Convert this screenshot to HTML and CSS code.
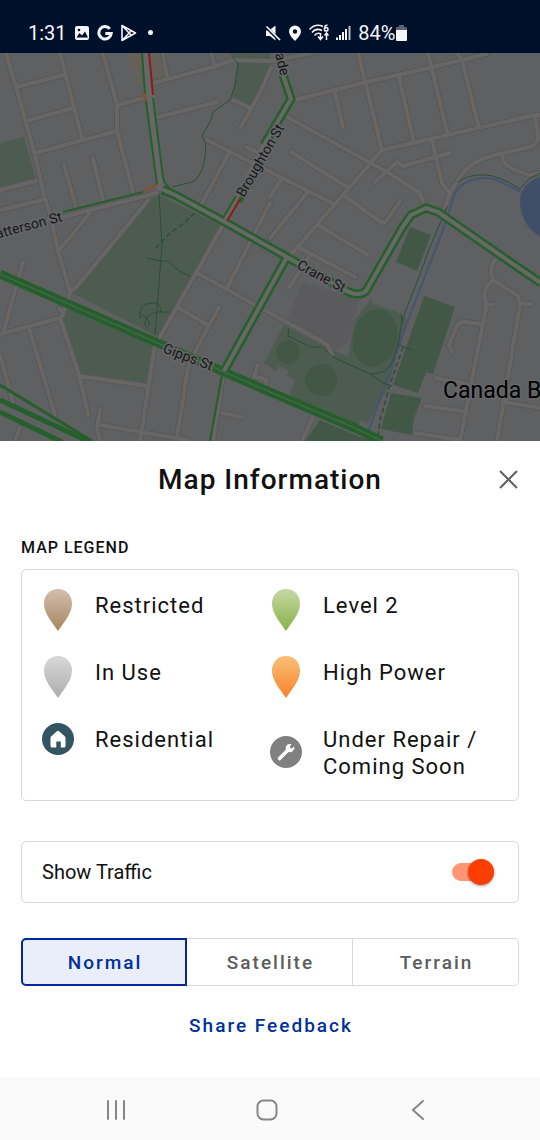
FILE: index.html
```
<!DOCTYPE html>
<html lang="en">
<head>
  <meta charset="UTF-8" />
  <meta name="viewport" content="width=device-width, initial-scale=1" />
  <title>Map Information</title>
  <link rel="stylesheet" href="styles.css">
</head>

<body>
  <header class="status-bar">
    <div class="status-group">
      <span class="time">1:31</span>
      <svg width="16" height="16" viewBox="0 0 16 16">
        <rect x="1" y="1" width="14" height="14" rx="2" fill="#f4f6fa"/>
        <path d="M2.500 12.500l3-4.500 2.500 2.500 3-4 3 6z" fill="#000f2a"/>
        <circle cx="5" cy="5" r="1.300" fill="#000f2a"/>
      </svg>
      <svg width="16" height="16" viewBox="0 0 16 16" fill="none" stroke="#f4f6fa" stroke-width="3">
        <path d="M12.800 3.800A6.200 6.200 0 1 0 14.200 8.600H8.300"/>
      </svg>
      <svg width="17" height="18" viewBox="0 0 17 18" fill="none" stroke="#f4f6fa" stroke-width="1.600" stroke-linejoin="round">
        <path d="M2 1.500v15L15.500 9zM2 1.500l9.500 10M2 16.500l9.500-10"/>
      </svg>
      <span class="dot"></span>
    </div>
    <div class="status-group">
      <svg width="16" height="16" viewBox="0 0 16 16" fill="#f4f6fa">
        <path d="M1 5.500h3L10.500 0.500v15L5 11H1z"/>
        <path d="M0.500 1.500l14 14" stroke="#000f2a" stroke-width="3"/>
        <path d="M1.500 1.500l13.500 13.500" stroke="#f4f6fa" stroke-width="1.700"/>
      </svg>
      <svg width="14" height="16" viewBox="0 0 14 16">
        <path fill-rule="evenodd" fill="#f4f6fa" d="M7 0.500a6 6 0 0 0-6 6C1 10.500 7 16 7 16s6-5.500 6-9.500a6 6 0 0 0-6-6zM7 4.300a2.200 2.200 0 1 1 0 4.400 2.200 2.200 0 0 1 0-4.400z"/>
      </svg>
      <svg width="20" height="17" viewBox="0 0 20 17" fill="none" stroke="#f4f6fa" stroke-width="1.500">
        <path d="M0.500 5.500Q6.500-1 14 2.500M3 8.500Q7 3.500 13 6.500M5.500 11.500Q8 8 12 10M11.500 9v6.500M9 12.500l2.500 3 2.500-3M17.500 16V9.500M15.500 11.500l2-2.500 2 2.500"/>
        <path d="M18.500 1.300Q15.500 0.800 15.500 5"/>
        <circle cx="17.200" cy="5.200" r="1.800"/>
      </svg>
      <svg width="15" height="16" viewBox="0 0 15 16" stroke="#f4f6fa" stroke-width="2">
        <path d="M1 12.500V15M4 10v5M7 7v8M10 4v11"/>
        <path d="M13.500 1v14" stroke="#b9c0cc"/>
      </svg>
      <span class="battery">84%<svg width="11" height="16" viewBox="0 0 11 16">
        <path d="M3 0h5v2h2a1 1 0 0 1 1 1v3H0V3a1 1 0 0 1 1-1h2z" fill="#596377"/>
        <path d="M0 5h11v10a1 1 0 0 1-1 1H1a1 1 0 0 1-1-1z" fill="#f4f6fa"/>
      </svg></span>
    </div>
  </header>

  <main>
    <svg class="map" viewBox="0 53 540 388" preserveAspectRatio="xMidYMid slice" role="img" aria-label="Street map with traffic">
      <defs>
        <!-- minor streets, drawn twice: dark casing, then fill -->
        <g id="streets">
          <path d="M5 50L14 80 26 122 35 155 44 195 50 215 58 250 70 292 68 300 62 316M17 87L63 75M26 121L73 108M60 53L82 138M35 153L117 131M103 53L117 105V131L133 192M117 105L144 98M64 165L76 207M93 158L103 200M0 190L36 181M0 210L42 200M0 233L63 217 157 193M90 213L60 249M148 200L107 250 77 286 70 292"/>
          <path d="M153 83L213 67 233 60 270 61M158 117L217 102M163 53L167 78M211 53L215 66M271 68L260 93 240 128M233 100L250 108M207 140L332 203M229 153L202 203M246 147L268 157M222 227L160 337 155 345 140 441M270 203L227 288M197 273L328 345 332 355M177 307L208 325M219 307L195 352 188 368 177 437M100 425L187 440M100 410L97 428 100 441"/>
          <path d="M78 376L148 386M60 318L80 378 88 415M0 334L60 318M59 309L63 312M29 328L55 415M0 355L13 402M23 262L4 330M20 428L15 441M223 375L213 441M222 413L242 417"/>
          <path d="M270 61L313 53M358 53L382 150M295 100L367 82 433 67 487 54M335 92L343 127M399 77L414 143M428 53L448 136M457 53L462 60 479 128M287 117L387 172 420 193 423 202M382 150L535 115H541M382 150L295 250 289 256M535 115L538 137Q538 144 530 147L500 154Q470 160 460 177L450 193 445 207M502 155Q503 165 515 170L528 175 541 173M432 140L442 183 448 191M375 182L397 162 403 166 450 153M291 152L347 187M343 195L378 220Q384 225 388 219L400 201M318 225L368 255M282 178L270 197M307 193L270 238M298 247L355 277M310 255L289 288"/>
          <path d="M497 257Q488 268 493 280L518 296 520 305 497 441M493 280Q484 287 485 295L486 308 460 441M486 305L494 304M520 304L531 304M482 324L464 322Q458 322 456 328L449 345 452 352M436 378L473 385M503 402L541 408M425 406L462 411M415 433L460 440M313 417L302 441M258 365L254 377 266 379V384"/>
        </g>
      </defs>

      <rect y="53" width="540" height="388" fill="#5f6062"/>
      <path fill="#656157" d="M128 53H163V78L138 85 134 71 129 67z"/>
      <path fill="#5b5b5e" d="M302 282L359 300 349 342 335 350 286 323z"/>

      <!-- parks -->
      <g fill="#4d5c50">
        <path d="M0 143L24 137 36 180 0 188zM230 53H270V66L250 107 231 100 238 66z"/>
        <path d="M157 194L222 226 158 337 72 293 110 250zM66 304L154 345 147 384 80 375 62 320z"/>
        <path d="M284 325L328 348 348 356 355 320 371 299 373 304 397 312 407 318 388 388 368 423 361 420 358 428 289 396 295 381 287 376 288 370 278 366 276 371 264 363z"/>
      </g>
      <g fill="#435746">
        <ellipse cx="375" cy="338" rx="22" ry="29" transform="rotate(14 375 338)"/>
        <circle cx="288" cy="352" r="12"/>
        <circle cx="321" cy="380" r="16"/>
        <path d="M410 227L431 235 417 271 396 262zM424 296L455 307 433 374 426 372 418 393 393 385zM391 393L422 398 414 418 412 435 381 429zM320 420L360 437 385 441H305zM483 53H493L485 56z"/>
      </g>

      <!-- water -->
      <path fill="#3f4f68" d="M541 176Q520 184 520 202 521 226 541 237z"/>
      <path fill="none" stroke="#45546f" stroke-width="2" d="M521 192L497 180Q482 175 467 182 456 187 453 199L443 230 410 315 368 432"/>

      <use href="#streets" fill="none" stroke="#58585a" stroke-width="6" stroke-linecap="round" stroke-linejoin="round"/>
      <use href="#streets" fill="none" stroke="#676665" stroke-width="4" stroke-linecap="round" stroke-linejoin="round"/>

      <!-- walking paths -->
      <g fill="none" stroke="#2a5035" stroke-width="1">
        <path d="M232 57L238 63 235 85 230 100 213 112 210 122 202 136 205 142Q207 155 202 170 196 183 188 183L172 187M159 194L162 245 155 335M146 258L160 261 168 261 178 270 191 277M171 312H158Q146 314 145 323 145 330 150 324 144 310 140 318 138 304 151 303 161 302 161 312"/>
        <path d="M457 182Q470 174 485 175 498 175 520 189L530 178 541 173M447 207L430 247 419 277 402 320 398 345 392 362Q387 374 370 374L333 357 322 347 311 347 288 336 289 328M370 374L383 383 392 386M397 344L412 350M401 313L402 324"/>
        <path stroke-dasharray="5 3" stroke-width="1.500" d="M195 213L184 223 169 234 156 248M403 347L390 385 380 420 378 437"/>
      </g>

      <!-- traffic -->
      <g fill="none" stroke-linejoin="round">
        <path stroke="#676766" stroke-width="8" d="M146 53L160 188"/>
        <g stroke="#255f2b">
          <path stroke-width="9" d="M162 190L175 195 223 221 287 257 343 289Q358 298 366 291L402 228 411 215 426 208 438 212 500 255 541 283"/>
          <path stroke-width="9" d="M264 156L238 201M287 257L224 371M283 75L291 99 264 145"/>
          <path stroke-width="9" d="M0 274L160 344 270 392 355 428 382 441"/>
        </g>
        <path stroke="#686966" stroke-width="4" d="M157 187L175 195 223 221 287 257 343 289Q358 298 366 291L402 228 411 215 426 208 438 212 500 255 541 283M287 257L224 371M283 75L291 99 264 145 225 221"/>
        <path stroke="#5c665b" stroke-width="1" d="M0 274L160 344 270 392 355 428 382 441"/>
        <g stroke="#255f2b" stroke-width="2">
          <path d="M142 53L145 94M146 101L157 185M153 98L163 178Q165 186 174 191M222 376L210 441M223 218L236 196M63 212L143 192"/>
          <path stroke-width="3" d="M0 385L92 441"/>
          <path stroke-width="5" d="M0 400L92 443M0 412L62 442"/>
        </g>
        <path stroke="#8a1b1d" stroke-width="2" d="M149 53L153 95M227 221L240 199"/>
        <path stroke="#8b4f25" stroke-width="2" d="M145 93L144 97 146 101M143 191L157 185"/>
      </g>

      <!-- labels -->
      <g class="map-labels">
        <text transform="translate(63 221) rotate(-15)" text-anchor="end">atterson St</text>
        <text transform="translate(244 198) rotate(-60)">Broughton St</text>
        <text transform="translate(275 54) rotate(76)">ade</text>
        <text transform="translate(296 268) rotate(28)">Crane St</text>
        <text transform="translate(162 352) rotate(21)">Gipps St</text>
        <text class="suburb" x="443" y="398">Canada B</text>
      </g>
    </svg>

    <section class="sheet">
      <div class="sheet-header">
        <h1>Map Information</h1>
        <button class="close" type="button" aria-label="Close">
          <svg width="20" height="20" viewBox="0 0 20 20" fill="none" stroke="#616161" stroke-width="2">
            <path d="M1 1l17 17M18 1l-17 17"/>
          </svg>
        </button>
      </div>

      <h2>MAP LEGEND</h2>
      <svg class="defs" width="0" height="0" aria-hidden="true">
        <defs>
          <linearGradient id="brown" x2="0" y2="1"><stop stop-color="#d3beae"/><stop offset="1" stop-color="#a78561"/></linearGradient>
          <linearGradient id="green" x2="0" y2="1"><stop stop-color="#c5d9a4"/><stop offset="1" stop-color="#88b148"/></linearGradient>
          <linearGradient id="grey" x2="0" y2="1"><stop stop-color="#d8d8d8"/><stop offset="1" stop-color="#adadad"/></linearGradient>
          <linearGradient id="orange" x2="0" y2="1"><stop stop-color="#f9c077"/><stop offset="1" stop-color="#fa812b"/></linearGradient>
          <path id="pin" d="M16 0C8 0 2 6 2 14.500 2 24 9 32 16 42 23 32 30 24 30 14.500 30 6 24 0 16 0z"/>
        </defs>
      </svg>
      <ul class="legend card">
        <li><svg width="32" height="42"><use href="#pin" fill="url(#brown)"/></svg><span>Restricted</span></li>
        <li><svg width="32" height="42"><use href="#pin" fill="url(#green)"/></svg><span>Level 2</span></li>
        <li><svg width="32" height="42"><use href="#pin" fill="url(#grey)"/></svg><span>In Use</span></li>
        <li><svg width="32" height="42"><use href="#pin" fill="url(#orange)"/></svg><span>High Power</span></li>
        <li>
          <svg width="32" height="32" viewBox="0 0 32 32">
            <circle cx="16" cy="16" r="16" fill="#335561"/>
            <path d="M15 8.200q1-.8 2 0l5.700 5q.8.700.8 1.700V23q0 1.500-1.500 1.500h-3.200V18.500h-4.500v6H10q-1.500 0-1.500-1.500v-8.100q0-1 .8-1.700z" fill="#fff"/>
          </svg>
          <span>Residential</span>
        </li>
        <li class="two-line">
          <svg width="32" height="32" viewBox="0 0 32 32">
            <circle cx="16" cy="16" r="16" fill="#808080"/>
            <path d="M9.500 22.500L19 13" stroke="#fff" stroke-width="3.600" stroke-linecap="round"/>
            <path d="M21.500 8.300L19.700 10.800 20.500 12.200 22 12.500 24.200 10.200Q25 13 22.800 15 20.500 17 17.500 15.800L15.800 14Q14.800 11 17 9 19 7.300 21.500 8.300z" fill="#fff"/>
          </svg>
          <span>Under Repair / Coming Soon</span>
        </li>
      </ul>

      <div class="traffic card">
        <label for="traffic">Show Traffic</label>
        <input type="checkbox" id="traffic" class="switch" checked />
      </div>

      <div class="map-types">
        <button type="button" class="active">Normal</button>
        <button type="button">Satellite</button>
        <button type="button">Terrain</button>
      </div>

      <a class="feedback" href="#feedback">Share Feedback</a>
    </section>
  </main>

  <nav class="system-nav">
    <button type="button" aria-label="Recent apps">
      <svg width="24" height="24" viewBox="0 0 24 24" stroke="#868686" stroke-width="2" stroke-linecap="round"><path d="M4 3v18M12 3v18M20 3v18"/></svg>
    </button>
    <button type="button" aria-label="Home">
      <svg width="24" height="24" viewBox="0 0 24 24" fill="none" stroke="#868686" stroke-width="2"><rect x="2.500" y="2.500" width="19" height="19" rx="6"/></svg>
    </button>
    <button type="button" aria-label="Back">
      <svg width="24" height="24" viewBox="0 0 24 24" fill="none" stroke="#868686" stroke-width="2" stroke-linecap="round"><path d="M17 3L7 12l10 9"/></svg>
    </button>
  </nav>

  <script>
    const typeButtons = document.querySelectorAll(".map-types button");

    typeButtons.forEach(btn => {
      btn.addEventListener("click", () => {
        typeButtons.forEach(b => b.classList.remove("active"));
        btn.classList.add("active");
      });
    });
  </script>
</body>
</html>
```

FILE: styles.css
```
* { box-sizing: border-box; }

body {
  font-family: Roboto, sans-serif;
  margin: 0;
  min-height: 100vh;
  display: flex;
  flex-direction: column;
  background: #fff;
  color: #111;
}

svg {
  flex-shrink: 0;
}

button {
  font-family: inherit;
  padding: 0;
  border: none;
  background: none;
  cursor: pointer;
}

.status-bar {
  display: grid;
  grid-template-columns: 49fr 51fr;
  align-items: center;
  height: 53px;
  padding: 12px 28px 0;
  background: #000f2a;
  color: #f4f6fa;
  font-size: 20px;
}

.status-group {
  display: flex;
  align-items: center;
  gap: 7px;
}

.battery {
  display: flex;
  align-items: center;
  gap: 1px;
}

.dot {
  width: 5px;
  height: 5px;
  margin-left: 4px;
  border-radius: 50%;
  background: #f4f6fa;
}

main {
  flex: 1;
  display: flex;
  flex-direction: column;
}

.map {
  flex: 1 1 0;
  width: 100%;
  min-height: 240px;
  background: #5f6062;
}

.map-labels {
  font-size: 14px;
  fill: #151617;
  stroke: #66676a;
  stroke-width: 3px;
  paint-order: stroke;
}

.map-labels .suburb {
  font-size: 23px;
  fill: #000;
}

.sheet {
  display: flex;
  flex-direction: column;
  padding: 17px 21px 35px;
}

.sheet-header {
  display: grid;
  grid-template-columns: 32px 1fr 32px;
  align-items: center;
  margin-bottom: 33px;
}

h1 {
  grid-column: 2;
  margin: 0;
  font-size: 28px;
  font-weight: 500;
  line-height: 44px;
  letter-spacing: 1px;
  text-align: center;
}

.close {
  display: flex;
  justify-content: flex-end;
}

h2 {
  margin: 0 0 8px;
  font-size: 16px;
  font-weight: 500;
  line-height: 26px;
  letter-spacing: 1px;
}

.defs {
  position: absolute;
}

.card {
  border: 1px solid #d8d8d8;
  border-radius: 5px;
}

.legend {
  display: grid;
  grid-template-columns: 1fr 1fr;
  row-gap: 25px;
  margin: 0 0 40px;
  padding: 19px 20px 20px;
  list-style: none;
}

.legend li {
  display: flex;
  align-items: flex-start;
  gap: 21px;
}

.legend span {
  padding-top: 3px;
  font-size: 22px;
  line-height: 27px;
  letter-spacing: 1px;
}

.legend .two-line {
  align-items: center;
}

.traffic {
  display: flex;
  align-items: center;
  justify-content: space-between;
  height: 62px;
  margin-bottom: 35px;
  padding: 0 24px 0 20px;
  font-size: 20px;
}

.switch {
  appearance: none;
  position: relative;
  width: 42px;
  height: 18px;
  margin: 0;
  border-radius: 9px;
  background: #bbb;
  cursor: pointer;
}

.switch::before {
  content: "";
  position: absolute;
  top: -4px;
  left: 0;
  width: 26px;
  height: 26px;
  border-radius: 50%;
  background: #f4f4f4;
  box-shadow: 0 1px 3px rgba(0,0,0,0.4);
}

.switch:checked {
  background: #ff9776;
}

.switch:checked::before {
  left: auto;
  right: 0;
  background: #fc3d00;
}

.map-types {
  display: grid;
  grid-template-columns: repeat(3, 1fr);
  margin-bottom: 24px;
}

.map-types button {
  height: 48px;
  padding-left: 2px;
  border: 1px solid #d8d8d8;
  border-left-width: 0;
  color: #5c5c5c;
  font-size: 19px;
  font-weight: 500;
  letter-spacing: 2px;
}

.map-types button:first-child {
  border-left-width: 1px;
  border-radius: 5px 0 0 5px;
}

.map-types button:last-child {
  border-radius: 0 5px 5px 0;
}

.map-types button.active {
  border: 2px solid #00289b;
  background: #eaeef8;
  color: #00309a;
}

.feedback {
  align-self: center;
  padding-left: 2px;
  color: #00309a;
  font-size: 19px;
  font-weight: 500;
  line-height: 32px;
  letter-spacing: 2px;
  text-decoration: none;
}

.system-nav {
  display: grid;
  grid-template-columns: repeat(3, 1fr);
  place-items: center;
  height: 63px;
  padding: 2px 46px 0 40px;
  background: #fafafa;
}

.system-nav button {
  display: flex;
}
```
